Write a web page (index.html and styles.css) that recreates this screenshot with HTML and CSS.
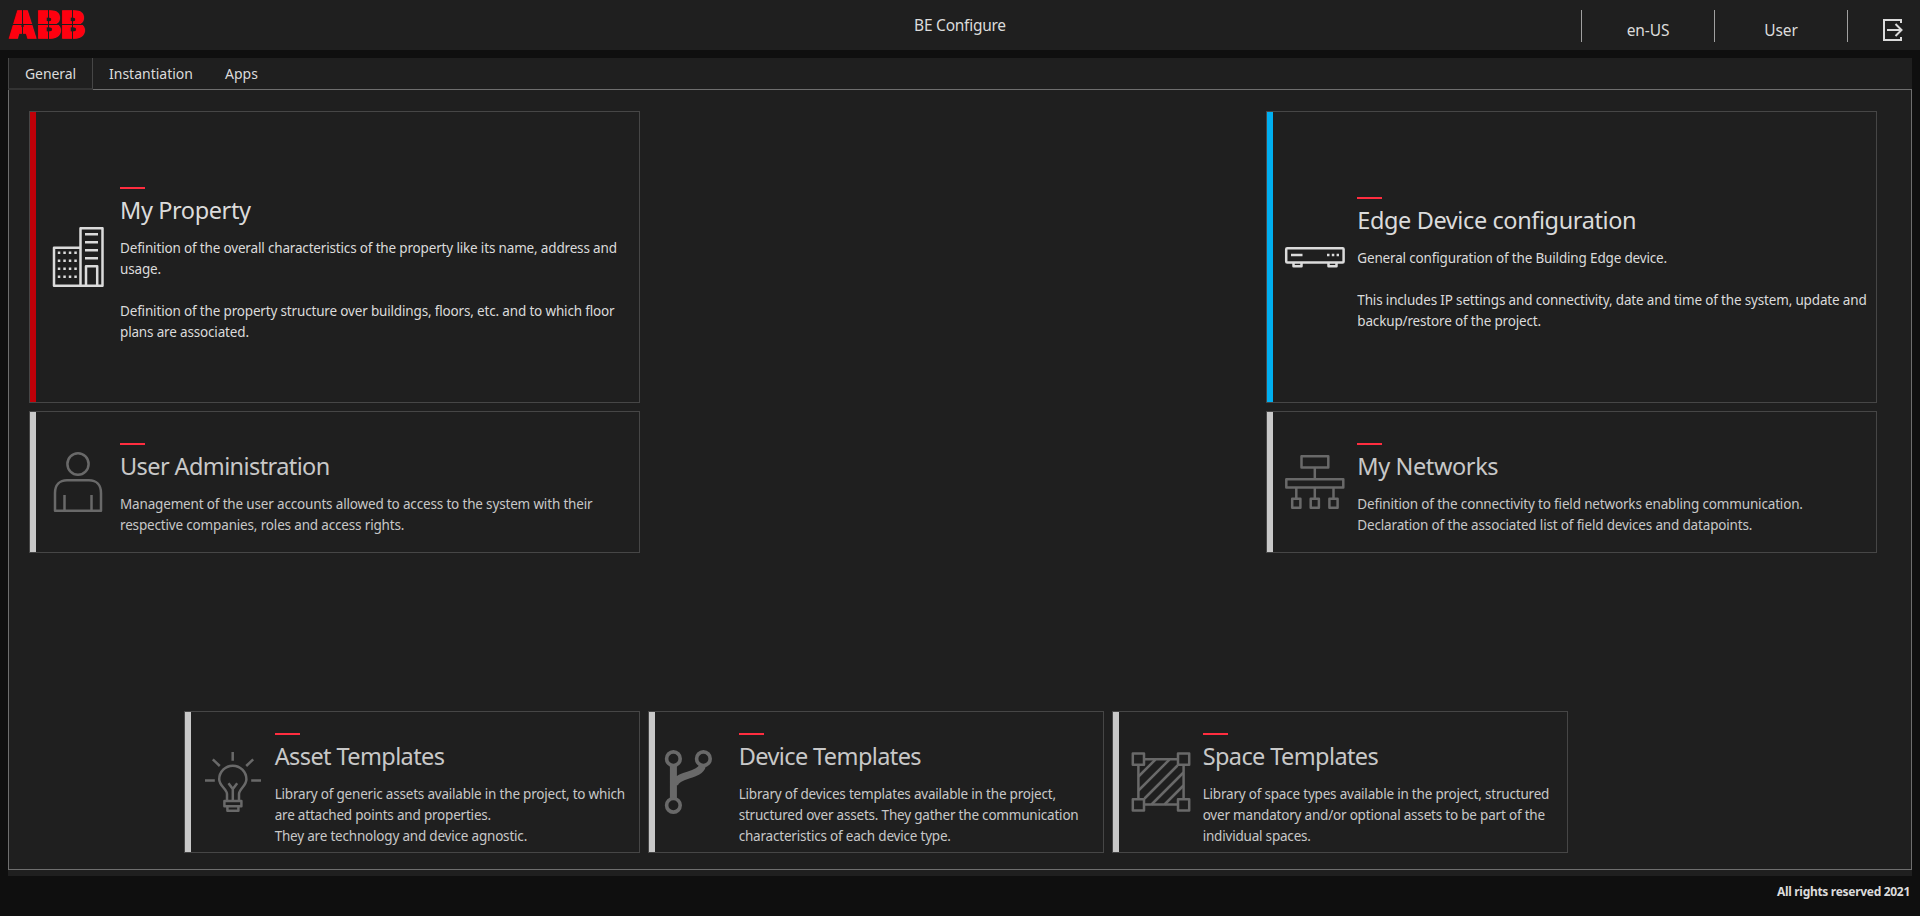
FILE: index.html
```html
<!DOCTYPE html>
<html lang="en-US">
<head>
<meta charset="utf-8">
<title>BE Configure</title>
<link rel="stylesheet" href="styles.css">
</head>
<body>
<header class="topbar">
  <svg class="logo" width="76" height="29" viewBox="0 0 76 29" role="img" aria-label="ABB">
    <g class="logo-letters">
      <text x="0.4" y="28.2" textLength="27.6" lengthAdjust="spacingAndGlyphs">A</text>
      <text x="28.8" y="28.2" textLength="24" lengthAdjust="spacingAndGlyphs">B</text>
      <text x="52.8" y="28.2" textLength="24" lengthAdjust="spacingAndGlyphs">B</text>
    </g>
    <path class="logo-cuts" d="M0 14.5H76M14.5 0V29M40.5 0V29M64.5 0V29"/>
  </svg>
  <h1 class="app-title">BE Configure</h1>
  <nav class="topnav">
    <a class="topnav-item">en-US</a>
    <a class="topnav-item">User</a>
    <a class="topnav-item topnav-exit">
      <svg width="20" height="22" viewBox="0 0 20 22"><path d="M18 4V1H1V21H18V18M4 11H18.5M12.5 5L18.5 11L12.5 17"/></svg>
    </a>
  </nav>
</header>

<main class="content">
  <div class="tabs">
    <a class="tab tab-active">General</a>
    <a class="tab">Instantiation</a>
    <a class="tab">Apps</a>
  </div>
  <div class="panel">
    <section class="card card-property card-bright">
      <svg class="icon" viewBox="0 0 60 60">
        <path class="line" d="M32.5 20.8H6V58.7H54.5V1.3H32.5V58.7M38 58V39.3H49.2V58"/>
        <path class="line" d="M37 7.3H50M37 15.3H50M37 23.3H50M37 31.3H50"/>
        <path class="line dots" d="M9.8 25.8H29M9.8 33.8H29M9.8 41.8H29M9.8 49.8H29"/>
      </svg>
      <div class="card-text">
        <h2>My Property</h2>
        <p>Definition of the overall characteristics of the property like its name, address and<br>usage.<br><br>Definition of the property structure over buildings, floors, etc. and to which floor<br>plans are associated.</p>
      </div>
    </section>

    <section class="card card-edge card-bright">
      <svg class="icon" viewBox="0 0 60 60">
        <rect class="line" x="1.2" y="21.2" width="57.4" height="14.3" rx="1"/>
        <path class="line" d="M6 28H17.5M42 28H44.5M46.8 28H49.3M51.6 28H54M8.5 36V39.3H16.5V36M43.5 36V39.3H51.5V36"/>
      </svg>
      <div class="card-text">
        <h2>Edge Device configuration</h2>
        <p>General configuration of the Building Edge device.<br><br>This includes IP settings and connectivity, date and time of the system, update and<br>backup/restore of the project.</p>
      </div>
    </section>

    <section class="card card-users">
      <svg class="icon" viewBox="0 0 60 60">
        <ellipse class="line" cx="30" cy="12" rx="10.6" ry="10.8"/>
        <path class="line" d="M7 58.8V41C7 33 11.5 28.2 19 28.2H41C48.5 28.2 53 33 53 41V58.8ZM16.5 43V58M43.5 43V58"/>
      </svg>
      <div class="card-text">
        <h2>User Administration</h2>
        <p>Management of the user accounts allowed to access to the system with their<br>respective companies, roles and access rights.</p>
      </div>
    </section>

    <section class="card card-networks">
      <svg class="icon" viewBox="0 0 60 60">
        <path class="line" d="M16.5 4.3H43.3V15.5H16.5ZM29.8 15.5V27M1.3 27.3H58.3V35.5H1.3ZM11.3 36V46M29.8 36V46M48.5 36V46M7.2 46.8H15.4V55.7H7.2ZM25.7 46.8H33.9V55.7H25.7ZM44.4 46.8H52.6V55.7H44.4Z"/>
      </svg>
      <div class="card-text">
        <h2>My Networks</h2>
        <p>Definition of the connectivity to field networks enabling communication.<br>Declaration of the associated list of field devices and datapoints.</p>
      </div>
    </section>

    <section class="card card-small card-assets">
      <svg class="icon" viewBox="0 0 60 60">
        <path class="line" d="M29.7 0V8.7M2 28.4H11.8M48.2 28.4H58M9.8 7.3L16.8 14M50.2 7.3L43.2 14"/>
        <path class="line" d="M24 48.5V42C24 37 16.2 34 16.2 27.3A13.6 13.6 0 0 1 43.4 27.3C43.4 34 36 37 36 42V48.5M25.5 31.2L29.8 37L34.2 31.2M29.8 37V48.5M21.4 49H38.4V54.2H21.4ZM24.4 55V58.8H35.4V55"/>
      </svg>
      <div class="card-text">
        <h2>Asset Templates</h2>
        <p>Library of generic assets available in the project, to which<br>are attached points and properties.<br>They are technology and device agnostic.</p>
      </div>
    </section>

    <section class="card card-small card-devices">
      <svg class="icon" viewBox="0 0 60 60">
        <path class="branch" d="M6.4 14V47M7.5 33C8.5 22 33 24.5 35.5 13.5"/>
        <g class="node"><circle cx="6.4" cy="6.7" r="6.8"/><circle cx="36.4" cy="6.7" r="6.8"/><circle cx="6.4" cy="53.3" r="6.8"/></g>
      </svg>
      <div class="card-text">
        <h2>Device Templates</h2>
        <p>Library of devices templates available in the project,<br>structured over assets. They gather the communication<br>characteristics of each device type.</p>
      </div>
    </section>

    <section class="card card-small card-spaces">
      <svg class="icon" viewBox="0 0 60 60">
        <path class="line" d="M14 7.2H46M14 52.6H46M7.4 14V46M52.6 14V46M1.8 1.6H13V12.8H1.8ZM47 1.6H58.2V12.8H47ZM1.8 47.2H13V58.4H1.8ZM47 47.2H58.2V58.4H47Z"/>
        <path class="line" d="M24.5 7.5L7.5 24.5M38.5 7.5L7.5 38.5M46.5 13.5L13.5 46.5M52.5 20.5L20.5 52.5M52.5 33.5L33.5 52.5"/>
      </svg>
      <div class="card-text">
        <h2>Space Templates</h2>
        <p>Library of space types available in the project, structured<br>over mandatory and/or optional assets to be part of the<br>individual spaces.</p>
      </div>
    </section>
  </div>
</main>

<footer class="footer">All rights reserved 2021</footer>
</body>
</html>
```
FILE: styles.css
```css
* {
  box-sizing: border-box;
}

body {
  margin: 0;
  height: 916px;
  display: flex;
  flex-direction: column;
  background: #0f0f0f;
  color: #dbdbdb;
  font-family: "Noto Sans", "Open Sans", sans-serif;
}

/* Top bar */
.topbar {
  flex: none;
  height: 50px;
  display: grid;
  grid-template-columns: 1fr auto 1fr;
  align-items: start;
  padding: 10px 0 0 8px;
  background: #1f1f1f;
}

.logo {
  overflow: visible;
}

.logo-letters {
  fill: #ff000f;
  stroke: #ff000f;
  stroke-width: 1.4px;
  font: 900 37.5px Inter, Roboto, sans-serif;
}

.logo-cuts {
  fill: none;
  stroke: #1f1f1f;
  stroke-width: 1px;
}

.app-title {
  margin: 3px 8px 0 0;
  font-size: 15.5px;
  font-weight: 400;
  line-height: 24px;
  letter-spacing: -0.25px;
}

.topnav {
  justify-self: end;
  display: flex;
}

.topnav-item {
  width: 133px;
  height: 32px;
  padding-top: 8px;
  border-left: 1px solid #a0a0a0;
  font-size: 15.5px;
  line-height: 24px;
  letter-spacing: -0.1px;
  text-align: center;
}

.topnav-exit {
  width: 73px;
  padding: 9px 0 0 35px;
  text-align: left;
}

.topnav-exit svg {
  display: block;
  fill: none;
  stroke: #dbdbdb;
  stroke-width: 2;
}

/* Tabs */
.content {
  flex: none;
  height: 818px;
  margin: 8px 8px 0;
  padding-bottom: 6px;
  display: flex;
  flex-direction: column;
  background: #1f1f1f;
}

.tabs {
  display: flex;
  height: 32px;
}

.tabs::after {
  content: "";
  flex: 1;
  border-bottom: 1px solid #6e6e6e;
}

.tab {
  padding: 0 16px;
  border-bottom: 1px solid #6e6e6e;
  font-size: 14px;
  line-height: 31px;
}

.tab-active {
  width: 85px;
  border: 1px solid #464646;
  border-width: 0 1px 2px;
  border-bottom-color: #333;
  letter-spacing: -0.1px;
}

/* Tiles */
.panel {
  flex: 1;
  display: grid;
  grid-template-columns: repeat(12, minmax(0, 1fr));
  grid-template-rows: repeat(5, 142px);
  gap: 8px;
  padding: 21px 34px 0 20px;
  border: 1px solid #6e6e6e;
  border-top: 0;
}

.card {
  display: flex;
  align-items: center;
  gap: 12px;
  border: 1px solid #464646;
  color: #c8c8c8;
  white-space: nowrap;
}

.card::before {
  content: "";
  flex: none;
  align-self: stretch;
  width: 6px;
  background: #c8c8c8;
}

.card-bright {
  color: #dbdbdb;
}

.card-property { grid-area: 1 / 1 / 3 / 5; }
.card-edge { grid-area: 1 / 9 / 3 / 13; }
.card-users { grid-area: 3 / 1 / 4 / 5; }
.card-networks { grid-area: 3 / 9 / 4 / 13; }
.card-assets { grid-area: 5 / 2 / 6 / 5; }
.card-devices { grid-area: 5 / 5 / 6 / 8; }
.card-spaces { grid-area: 5 / 8 / 6 / 11; }

.card-property::before { background: #bf0008; }
.card-edge::before { background: #00aff0; }

.card-text {
  padding: 16px 0 0.5px;
}

.card-text::before {
  content: "";
  display: block;
  width: 25px;
  height: 2px;
  background: #ff2d3f;
}

.card h2 {
  margin: 5px 0 12px;
  font-size: 23.5px;
  font-weight: 400;
  line-height: 32px;
  letter-spacing: -0.4px;
}

.card p {
  margin: 0;
  font-size: 13.5px;
  line-height: 21px;
  letter-spacing: -0.165px;
}

.card-users h2,
.card-small h2 {
  letter-spacing: -0.6px;
}

.card-small p {
  letter-spacing: -0.2px;
}

/* Icons */
.icon {
  flex: none;
  width: 60px;
  height: 60px;
  overflow: visible;
  color: #696969;
}

.card-bright .icon {
  color: #dbdbdb;
}

.line {
  fill: none;
  stroke: currentColor;
  stroke-width: 2.5;
  stroke-linejoin: round;
}

.dots {
  stroke-width: 2.5;
  stroke-dasharray: 2.5 3;
}

.branch {
  fill: none;
  stroke: currentColor;
  stroke-width: 7;
}

.node {
  fill: #1f1f1f;
  stroke: currentColor;
  stroke-width: 3.6;
}

.footer {
  padding: 8px 10px 0 0;
  font-size: 12px;
  font-weight: 700;
  line-height: 16px;
  letter-spacing: -0.3px;
  text-align: right;
}
```
